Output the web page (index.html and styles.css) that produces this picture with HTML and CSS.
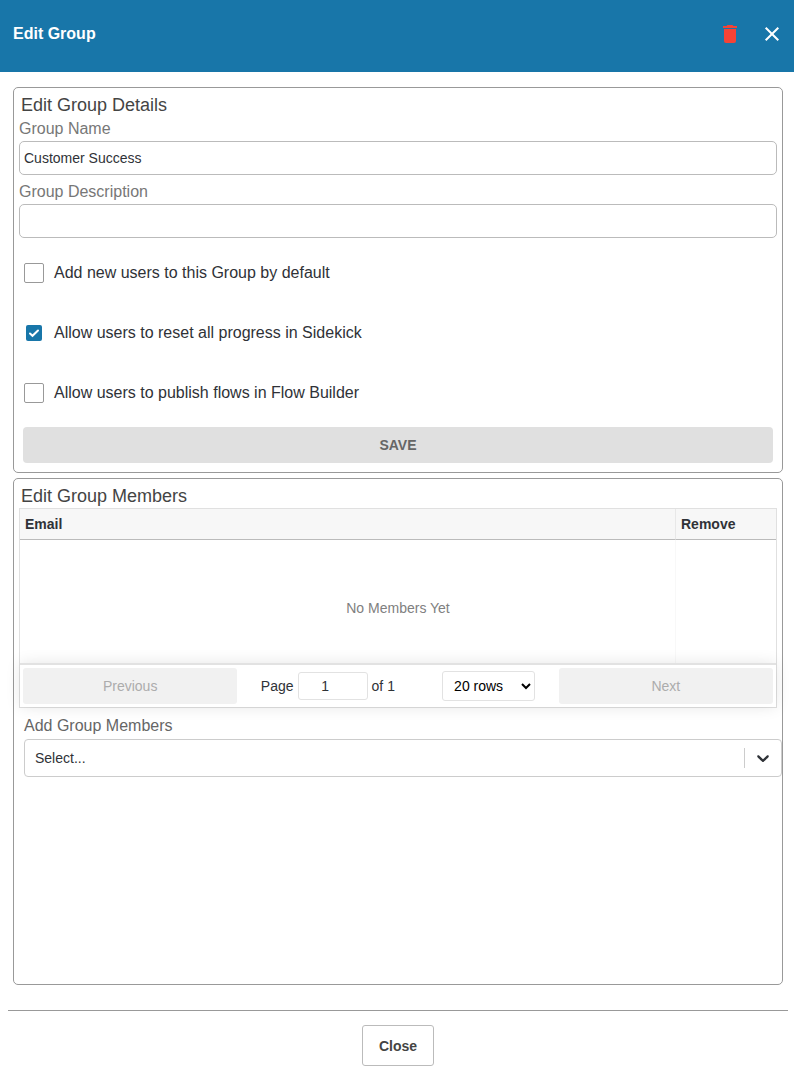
FILE: index.html
```html
<!DOCTYPE html>
<html lang="en">
  <head>
    <meta charset="UTF-8" />
    <meta name="viewport" content="width=device-width, initial-scale=1.0" />
    <title>Edit Group</title>
    <link rel="stylesheet" href="styles.css">
  </head>
  <body>
    <header class="header">
      <h1>Edit Group</h1>
      <div class="header-actions">
        <button class="icon-button delete" aria-label="Delete group">
          <svg width="24" height="24" viewBox="0 0 24 24" fill="currentColor">
            <path d="M6 7h12v12a2 2 0 0 1-2 2H8a2 2 0 0 1-2-2z" />
            <path d="M5 4h3.5l1-1h5l1 1H19v2H5z" />
          </svg>
        </button>
        <button class="icon-button" aria-label="Close dialog">
          <svg width="24" height="24" viewBox="0 0 24 24" fill="none">
            <path stroke="currentColor" stroke-width="2" d="M5.7 5.7l12.6 12.6M18.3 5.7L5.7 18.3" />
          </svg>
        </button>
      </div>
    </header>

    <main class="content">
      <form class="panel">
        <h2>Edit Group Details</h2>
        <div class="field">
          <label for="name">Group Name</label>
          <input type="text" id="name" name="name" value="Customer Success" />
        </div>
        <div class="field">
          <label for="description">Group Description</label>
          <input type="text" id="description" name="description" />
        </div>
        <div class="checks">
          <label class="check">
            <input type="checkbox" name="default" />
            Add new users to this Group by default
          </label>
          <label class="check">
            <input type="checkbox" name="reset" checked />
            Allow users to reset all progress in Sidekick
          </label>
          <label class="check">
            <input type="checkbox" name="publish" />
            Allow users to publish flows in Flow Builder
          </label>
        </div>
        <button class="save" disabled>SAVE</button>
      </form>

      <section class="panel members">
        <h2>Edit Group Members</h2>
        <div class="members-table">
          <table>
            <thead>
              <tr>
                <th>Email</th>
                <th class="remove">Remove</th>
              </tr>
            </thead>
            <tbody>
              <tr>
                <td></td>
                <td></td>
              </tr>
            </tbody>
          </table>
          <div class="pagination">
            <button class="page-button" disabled>Previous</button>
            <div class="page-controls">
              <div class="page-info">
                <label for="page">Page</label>
                <input type="number" id="page" value="1" min="1" max="1" />
                <span>of 1</span>
              </div>
              <select class="page-size" aria-label="Rows per page">
                <option>5 rows</option>
                <option>10 rows</option>
                <option selected>20 rows</option>
                <option>25 rows</option>
                <option>50 rows</option>
                <option>100 rows</option>
              </select>
            </div>
            <button class="page-button" disabled>Next</button>
          </div>
          <p class="no-data">No Members Yet</p>
        </div>
        <div class="add-members">
          <label for="add">Add Group Members</label>
          <div class="select">
            <select id="add">
              <option>Select...</option>
            </select>
            <span class="select-indicator">
              <svg width="20" height="20" viewBox="0 0 20 20" fill="currentColor">
                <path d="M4.516 7.548c0.436-0.446 1.043-0.481 1.576 0l3.908 3.747 3.908-3.747c0.533-0.481 1.141-0.446 1.574 0 0.436 0.445 0.408 1.197 0 1.615-0.406 0.418-4.695 4.502-4.695 4.502-0.217 0.223-0.502 0.335-0.787 0.335s-0.57-0.112-0.789-0.335c0 0-4.287-4.084-4.695-4.502s-0.436-1.17 0-1.615z" />
              </svg>
            </span>
          </div>
        </div>
      </section>
    </main>

    <footer class="footer">
      <button class="close">Close</button>
    </footer>
  </body>
</html>
```

FILE: styles.css
```css
* {
  box-sizing: border-box;
}

body {
  display: flex;
  flex-direction: column;
  min-height: 100vh;
  margin: 0;
  font-family: "Liberation Sans", Helvetica, Arial, sans-serif;
  font-size: 14px;
  color: #2f3237;
  background: #fff;
}

h1,
h2,
p {
  margin: 0;
}

button,
input,
select {
  margin: 0;
  font: inherit;
  color: inherit;
}

.header {
  display: flex;
  align-items: center;
  justify-content: space-between;
  height: 72px;
  padding: 0 10px 4px 13px;
  color: #fff;
  background: #1876a9;
}

h1 {
  font-size: 16px;
  line-height: 20px;
}

.header-actions {
  display: flex;
  gap: 18px;
}

.icon-button {
  display: flex;
  padding: 0;
  border: 0;
  background: none;
}

.delete {
  color: #f44336;
}

.content {
  flex: 1;
  display: flex;
  flex-direction: column;
  gap: 5px;
  padding: 15px 11px 25px 13px;
}

.panel {
  padding: 5px;
  border: 1px solid #999;
  border-radius: 5px;
}

h2 {
  padding-left: 2px;
  font-size: 18px;
  font-weight: normal;
  line-height: 24px;
  color: #444;
}

.field {
  display: grid;
  margin-bottom: 5px;
}

.field label {
  font-size: 16px;
  line-height: 24px;
  color: #777;
}

.field input {
  width: 100%;
  height: 34px;
  padding: 0 4px;
  border: 1px solid #bbb;
  border-radius: 5px;
}

.check {
  display: flex;
  align-items: center;
  gap: 10px;
  height: 60px;
  padding-left: 5px;
  font-size: 16px;
}

.check input {
  appearance: none;
  width: 20px;
  height: 20px;
  border: 1px solid #999;
  border-radius: 2px;
  background: #fff;
}

.check input:checked {
  width: 16px;
  height: 16px;
  margin: 2px;
  border: 0;
  background: #1876a9 url("data:image/svg+xml,%3Csvg xmlns='http://www.w3.org/2000/svg' viewBox='0 0 16 16'%3E%3Cpath fill='none' stroke='white' stroke-width='2' stroke-linecap='round' d='M4 8.5l2.5 2.3L12 5.5'/%3E%3C/svg%3E");
}

.save {
  display: block;
  width: calc(100% - 8px);
  height: 36px;
  margin: 4px;
  border: 0;
  border-radius: 4px;
  font-weight: bold;
  color: #666;
  background: #e0e0e0;
}

.members {
  flex: 1;
}

.members-table {
  position: relative;
  border: 1px solid #e0e0e0;
}

table {
  width: 100%;
  border-collapse: separate;
  border-spacing: 0;
  table-layout: fixed;
}

th {
  height: 31px;
  padding: 0 5px;
  border-bottom: 1px solid #bbb;
  text-align: left;
  background: #f7f7f7;
}

th:first-child {
  border-right: 1px solid #e8e8e8;
}

.remove {
  width: 100px;
}

td {
  height: 123px;
  padding: 0;
}

td:first-child {
  border-right: 1px solid #f8f8f8;
}

.pagination {
  display: flex;
  padding: 3px;
  border-top: 2px solid #e2e2e2;
  box-shadow: 0 0 15px 0 rgba(0, 0, 0, 0.1);
}

.page-button {
  flex: 1;
  height: 36px;
  padding: 0;
  border: 0;
  border-radius: 3px;
  color: #acacac;
  background: #f1f1f1;
}

.page-controls {
  flex: 1.5;
  display: flex;
  align-items: center;
  justify-content: space-around;
}

.page-info {
  display: flex;
  align-items: center;
  gap: 4px;
  margin: 0 10px;
}

.page-info input,
.page-size {
  border: 1px solid #e2e2e2;
  border-radius: 3px;
  background: #fff;
}

.page-info input {
  width: 70px;
  height: 28px;
  text-align: center;
}

.page-size {
  height: 30px;
  margin: 0 10px;
  padding: 5px 7px;
  color: #000;
}

.no-data {
  position: absolute;
  top: 50%;
  left: 50%;
  transform: translate(-50%, -50%);
  color: #808080;
}

/* keeps the full row width, so it runs up to the panel's right border */
.add-members {
  display: grid;
  gap: 1px;
  margin: 6px -5px 0 5px;
}

.add-members label {
  font-size: 16px;
  line-height: 24px;
  color: #666;
}

.select {
  position: relative;
}

.select select {
  appearance: none;
  width: 100%;
  height: 38px;
  padding: 0 48px 0 10px;
  border: 1px solid #ccc;
  border-radius: 4px;
  background: #fff;
}

.select-indicator {
  position: absolute;
  top: 9px;
  right: 1px;
  padding: 0 8px;
  border-left: 1px solid #ccc;
  height: 20px;
  pointer-events: none;
}

.footer {
  display: flex;
  justify-content: center;
  margin: 0 6px 0 8px;
  padding: 14px 0 10px;
  border-top: 1px solid #999;
}

.close {
  height: 41px;
  padding: 0 16px;
  border: 1px solid #bbb;
  border-radius: 3px;
  font-weight: bold;
  color: #444;
  background: #fff;
}
```
